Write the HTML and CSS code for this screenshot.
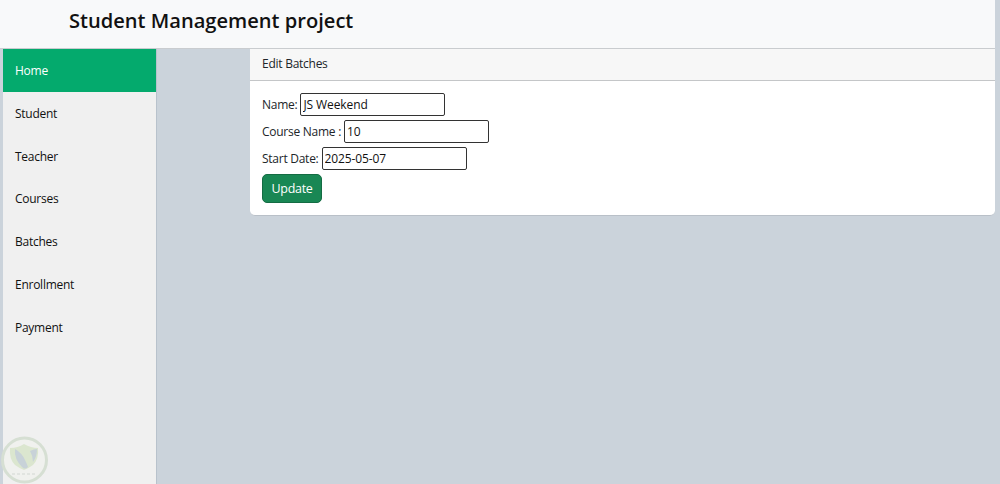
FILE: index.html
```html
<!DOCTYPE html>
<html>
<head>
    <meta charset="utf-8">
    <title>Student Management project</title>
    <link rel="stylesheet" href="styles.css">
</head>
<body>
    <div class="page">
        <header class="top_bar">
            <h1>Student Management project</h1>
        </header>
        <div class="main">
            <nav class="side_menu">
                <a class="active" href="#">Home</a>
                <a href="#">Student</a>
                <a href="#">Teacher</a>
                <a href="#">Courses</a>
                <a href="#">Batches</a>
                <a href="#">Enrollment</a>
                <a href="#">Payment</a>
            </nav>
            <div class="content">
                <div class="card">
                    <div class="card_header">Edit Batches</div>
                    <form class="card_body">
                        <div class="field">
                            <label for="name">Name:</label>
                            <input type="text" id="name" value="JS Weekend">
                        </div>
                        <div class="field">
                            <label for="course">Course Name :</label>
                            <input type="text" id="course" value="10">
                        </div>
                        <div class="field">
                            <label for="start">Start Date:</label>
                            <input type="text" id="start" value="2025-05-07">
                        </div>
                        <button type="button">Update</button>
                    </form>
                </div>
            </div>
        </div>
    </div>
    <svg class="watermark" viewBox="0 0 48 48" width="48" height="48">
        <circle cx="23.5" cy="24" r="22" fill="#f0f1ee" stroke="#d6dfd3" stroke-width="3"/>
        <path d="M9 12 Q17 12 23 8 Q30 12 37 12 Q38 23 32 29 Q28 32 23 34 Q18 32 14 29 Q8 23 9 12 Z" fill="#dbe6cf"/>
        <path d="M14 13 Q21 17 24 24 Q26 28 27 31 Q24 34 21 31 Q13 23 14 13 Z" fill="#c8d2d8"/>
        <path d="M29 15 Q33 13 36 13 Q36 21 32 26 Q32 20 29 15 Z" fill="#c8d2d8"/>
        <path d="M11 38 H34" stroke="#dcdfdc" stroke-width="1.5" stroke-dasharray="3 2"/>
    </svg>
</body>
</html>
```

FILE: styles.css
```css
html, body {
    height: 100%;
}

body {
    margin: 0;
    background-color: #cbd3db;
    font-family: "Open Sans", "Noto Sans", sans-serif;
    font-size: 12px;
    letter-spacing: -0.26px;
    color: #212529;
    overflow: hidden;
}

.page {
    display: flex;
    flex-direction: column;
    height: 100%;
    padding-right: 5px;
    box-sizing: border-box;
}

.top_bar {
    height: 41px;
    background-color: #f8f9fa;
    padding: 0 0 7px 69px;
    display: flex;
    align-items: center;
    border-bottom: 1px solid #c9cccf;
}

.top_bar h1 {
    margin: 0;
    font-size: 20.1px;
    font-weight: 600;
    letter-spacing: 0;
    color: #111;
}

.main {
    flex: 1;
    display: flex;
    padding-left: 3px;
}

.side_menu {
    width: 153px;
    background-color: #f0f0f0;
    border-right: 1px solid #b8c2cc;
}

.side_menu a {
    display: flex;
    align-items: center;
    height: 42.85px;
    padding-left: 12px;
    color: #111;
    text-decoration: none;
}

.side_menu a.active {
    background-color: #04aa6d;
    color: #fff;
}

.content {
    flex: 1;
    padding-left: 93px;
}

.card {
    background-color: #fff;
    border-radius: 0 0 5px 5px;
    border-bottom: 1px solid #b9c0c8;
}

.card_header {
    height: 31px;
    line-height: 30px;
    padding-left: 12px;
    background-color: #f7f7f7;
    border-bottom: 1px solid #c4c6c8;
}

.card_body {
    padding: 12px 12px 12px;
}

.field {
    display: flex;
    align-items: center;
    gap: 3px;
    height: 23px;
    margin-bottom: 4px;
}

.field input {
    width: 145px;
    height: 23px;
    box-sizing: border-box;
    padding: 0 3px 0 2px;
    border: 1px solid #333;
    border-radius: 2px;
    font-family: inherit;
    font-size: 12px;
    letter-spacing: -0.1px;
    color: #111;
}

button {
    display: block;
    height: 29px;
    width: 60px;
    padding: 0;
    background-color: #198754;
    border: 1px solid #146c43;
    border-radius: 5px;
    color: #fff;
    font-family: inherit;
    font-size: 12.5px;
    letter-spacing: -0.3px;
}

.watermark {
    position: absolute;
    left: 1px;
    top: 436px;
}
```
